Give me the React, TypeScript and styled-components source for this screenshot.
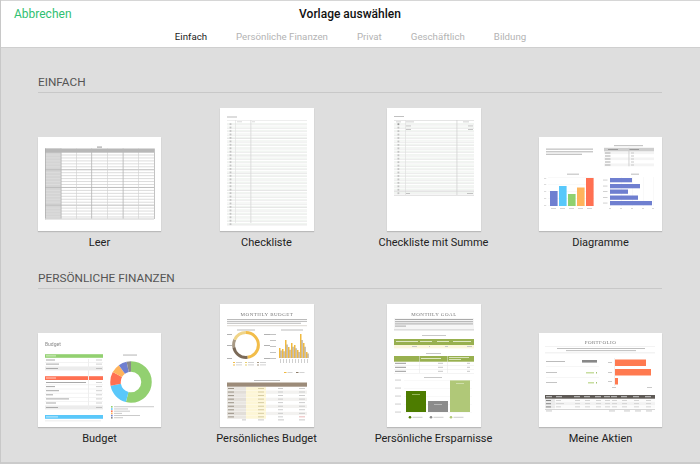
import React from "react";
import styled, { createGlobalStyle } from "styled-components";

const Global = createGlobalStyle`
  html, body { margin: 0; padding: 0; background: #dedede; }
  body { font-family: Roboto, "Liberation Sans", sans-serif; -webkit-font-smoothing: antialiased; }
`;
const Page = styled.div`
  width: 700px; height: 464px; overflow: hidden; background: #dedede;
  display: flex; flex-direction: column; box-sizing: border-box;
  border-left: 1px solid #c8c8c8; border-bottom: 2px solid #cbcbcb;
`;
const Header = styled.header`
  height: 48px; flex: none; box-sizing: border-box; background: #fff;
  border-top: 1px solid #d6d6d6; border-bottom: 1px solid #cfcfcf;
  position: relative; display: flex; flex-direction: column; align-items: center;
`;
const Cancel = styled.span`
  position: absolute; left: 13px; top: 5px; font-size: 12px; line-height: 17px; color: #2fbf71;
`;
const Title = styled.h1`
  margin: 5px 0 0 -1px; font-size: 12px; line-height: 17px; font-weight: 500; color: #111;
`;
const Tabs = styled.nav`
  margin-top: 7px; display: flex; gap: 29px;
`;
const Tab = styled.span<{ $active?: boolean }>`
  font-size: 9.7px; line-height: 13px; color: ${(p) => (p.$active ? "#222" : "#b3b3b3")};
`;
const Main = styled.main`
  padding: 0 38px 0 37px; display: flex; flex-direction: column;
`;
const Section = styled.section`
  display: flex; flex-direction: column;
`;
const SectionTitle = styled.h2<{ $first?: boolean }>`
  margin: ${(p) => (p.$first ? "27px" : "21px")} 0 0; padding-bottom: 2px; font-size: 11.8px; line-height: 15px; font-weight: 400;
  color: #555; border-bottom: 1px solid #c8c8c8;
`;
const Grid = styled.div`
  display: grid; grid-template-columns: repeat(4, 123px); column-gap: 44px; margin-top: 15px;
`;
const Card = styled.figure`
  margin: 0; display: flex; flex-direction: column; align-items: center; height: 142px; justify-content: flex-end;
`;
const Paper = styled.div<{ $portrait?: boolean }>`
  width: ${(p) => (p.$portrait ? 94 : 123)}px; height: ${(p) => (p.$portrait ? 123 : 94)}px;
  background: #fff; box-shadow: 0 1px 1px rgba(0,0,0,.16); display: flex; overflow: hidden;
  svg { display: block; filter: blur(.35px); }
`;
const Label = styled.figcaption`
  margin-top: 5px; font-size: 11px; line-height: 14px; height: 14px; color: #222; white-space: nowrap;
`;

const Svg = ({ w, h, children }: { w: number; h: number; children: React.ReactNode }) => (
  <svg width={w} height={h} viewBox={`0 0 ${w} ${h}`}>{children}</svg>
);
const R = ({ x, y, w, h, f }: { x: number; y: number; w: number; h: number; f: string }) => (
  <rect x={x} y={y} width={w} height={h} fill={f} />
);
const Greek = ({ x, y, ws, step = 1.6, f = "#aaa", h = 0.8 }: { x: number; y: number; ws: number[]; step?: number; f?: string; h?: number }) => (
  <>{ws.map((w, i) => <R key={i} x={x} y={y + i * step} w={w} h={h} f={f} />)}</>
);
const Serif = styled.text`
  font-family: "Liberation Serif", serif; letter-spacing: .5px; fill: #777; text-anchor: middle;
`;
const Ring = ({ cx, cy, r, sw, data, start = -90 }: { cx: number; cy: number; r: number; sw: number; data: [number, string][]; start?: number }) => {
  let acc = 0;
  return (
    <g transform={`rotate(${start} ${cx} ${cy})`}>
      {data.map(([v, c], i) => {
        const el = <circle key={i} cx={cx} cy={cy} r={r} fill="none" stroke={c} strokeWidth={sw} pathLength={100} strokeDasharray={`${v} ${100 - v}`} strokeDashoffset={-acc} />;
        acc += v;
        return el;
      })}
    </g>
  );
};

const Leer = () => {
  const cols = [22.7, 38.3, 53.3, 69.3, 84.7, 100.3, 116];
  const rows = Array.from({ length: 22 }, (_, i) => 17.5 + i * 2.95);
  return (
    <Svg w={123} h={94}>
      <R x={59} y={9.5} w={5} h={1.2} f="#aaa" />
      <R x={7} y={11.5} w={16} h={70.5} f="#d4d4d4" />
      {rows.map((y, i) => <R key={i} x={7} y={y} w={109} h={1} f={i % 6 === 5 ? "#bdbdbd" : "#dcdcdc"} />)}
      {cols.map((x, i) => <R key={i} x={x} y={11.5} w={i % 2 ? .6 : .8} h={70.5} f={i % 2 ? "#cfcfcf" : "#b4b4b4"} />)}
      <R x={7} y={11.5} w={109} h={4.2} f="#b8b8b8" />
      <R x={7} y={11.5} w={.7} h={71} f="#aaa" />
      <R x={7} y={81.4} w={109} h={1.2} f="#d8d8d8" />
    </Svg>
  );
};
const Checklist = () => {
  const rows = Array.from({ length: 30 }, (_, i) => 15 + i * 3.45);
  return (
    <Svg w={94} h={123}>
      <R x={7} y={8.5} w={10} h={1} f="#bbb" />
      <R x={7} y={12} w={80} h={.5} f="#dcdcdc" />
      <R x={17} y={13.5} w={5} h={.7} f="#ccc" />
      <R x={32} y={13.5} w={3} h={.7} f="#ccc" />
      {rows.map((y, i) => (
        <g key={i}>
          <R x={7} y={y} w={80} h={1.3} f="#f1f5f1" />
          <R x={7} y={y + 1.6} w={80} h={.6} f={i % 5 === 4 ? "#d8d8d8" : "#e4e4e4"} />
          <R x={9.6} y={y + .2} w={1.8} h={1.8} f="#c4c4c4" />
        </g>
      ))}
      <R x={15} y={12} w={.6} h={103} f="#dedede" />
      <R x={30.5} y={12} w={.8} h={103} f="#d6d6d6" />
    </Svg>
  );
};
const ChecklistSum = () => {
  const rows = Array.from({ length: 21 }, (_, i) => 15 + i * 3.45);
  return (
    <Svg w={94} h={123}>
      <R x={7} y={8} w={10} h={1} f="#c0c0c0" />
      <R x={7} y={12} w={80} h={.6} f="#d4d4d4" />
      <R x={9} y={13.5} w={5} h={.8} f="#c8c8c8" />
      <R x={19} y={13.5} w={8} h={.8} f="#c8c8c8" />
      <R x={76} y={13.5} w={6} h={.8} f="#c8c8c8" />
      {rows.map((y, i) => (
        <g key={i}>
          <R x={7} y={y} w={80} h={1.4} f="#f1f5f1" />
          <R x={7} y={y + 1.7} w={80} h={.6} f="#e2e2e2" />
          <R x={10.5} y={y + .3} w={1.8} h={1.8} f={i < 1 ? "#999" : "#c4c4c4"} />
        </g>
      ))}
      <R x={19} y={17.5} w={5} h={.9} f="#c0c0c0" /><R x={19} y={21} w={5} h={.9} f="#c0c0c0" />
      <R x={81} y={17.5} w={5} h={.9} f="#c0c0c0" /><R x={81} y={21} w={5} h={.9} f="#c0c0c0" />
      <R x={18} y={12} w={.6} h={75} f="#dcdcdc" />
      <R x={69.6} y={12} w={.7} h={75} f="#cccccc" />
      <R x={7} y={83} w={80} h={.6} f="#d2d2d2" />
      <R x={7} y={87} w={80} h={.6} f="#d2d2d2" />
      <R x={19} y={85} w={4} h={.9} f="#bbb" /><R x={80} y={85} w={6} h={.9} f="#bbb" />
    </Svg>
  );
};
const Diagrams = () => (
  <Svg w={123} h={94}>
    <Greek x={7} y={11.5} ws={[47, 47, 36]} step={2.6} h={1.3} f="#c4c4c4" />
    <R x={75} y={8} w={29} h={1.2} f="#c6c6c6" />
    <R x={65} y={10.8} w={50} h={3.7} f="#cecece" />
    <R x={69} y={12} w={10} h={1} f="#999" /><R x={90} y={12} w={10} h={1} f="#999" />
    {[0, 1, 2, 3, 4].map((i) => (
      <g key={i}>
        <R x={65} y={14.5 + i * 3} w={50} h={2.8} f={i % 2 ? "#fff" : "#f4f4f4"} />
        <R x={66} y={15.5 + i * 3} w={5.5} h={1} f="#aaa" />
        <R x={92} y={15.5 + i * 3} w={3} h={1} f="#c8c8c8" />
      </g>
    ))}
    <R x={89.5} y={10.8} w={.9} h={18.5} f="#cecece" />
    <R x={28} y={36.6} w={12} h={1.2} f="#c6c6c6" />
    {[40, 47, 54, 61, 68].map((y) => <R key={y} x={9} y={y} w={46} h={.4} f="#f0f0f0" />)}
    {[41, 47, 54, 61, 68].map((y) => <R key={y} x={5} y={y} w={2.2} h={.8} f="#d4d4d4" />)}
    {[[11, 54, "#6f7fd0"], [20, 49, "#58c8fb"], [29, 57, "#8fd16f"], [38, 50.5, "#ffb35c"], [47, 41, "#ff7052"]].map(([x, y, c]) => (
      <g key={String(x)}>
        <R x={Number(x)} y={Number(y)} w={7.6} h={69 - Number(y)} f={String(c)} />
        <R x={Number(x) + 1} y={71} w={5} h={.9} f="#d0d0d0" />
      </g>
    ))}
    <R x={92} y={36.6} w={8} h={1.2} f="#c6c6c6" />
    {[71, 82, 93, 104, 114].map((x) => <R key={x} x={x} y={40} w={.4} h={29} f="#f0f0f0" />)}
    {[[41, 93], [47, 101], [52.5, 89], [58.5, 99], [64, 113]].map(([y, e]) => (
      <g key={y}>
        <R x={71} y={y} w={e - 71} h={4.3} f="#6f7fd0" />
        <R x={64} y={y + 1.6} w={4.5} h={.9} f="#cccccc" />
      </g>
    ))}
    {[71, 82, 93, 104, 114].map((x) => <R key={x} x={x - 1} y={71} w={2} h={.9} f="#d4d4d4" />)}
  </Svg>
);
const TableRows = ({ y, widths }: { y: number; widths: number[] }) => (
  <>
    {widths.map((w, i) => (
      <g key={i}>
        <R x={8} y={y + i * 4.1} w={w} h={1} f="#a8a8a8" />
        <R x={58} y={y + i * 4.1} w={6} h={1} f="#d0d0d0" />
        <R x={7} y={y + i * 4.1 + 2.7} w={58} h={.4} f="#e2e2e2" />
      </g>
    ))}
  </>
);
const Budget = () => (
  <Svg w={123} h={94}>
    <text x={7} y={13} fontFamily="Roboto, sans-serif" fontSize={5} fill="#888">Budget</text>
    <R x={7} y={21.2} w={58} h={3.6} f="#92d070" />
    <R x={8} y={22.4} w={10} h={1} f="#d8efc8" />
    <TableRows y={26.5} widths={[9, 13]} />
    <R x={7} y={34} w={58} h={3.4} f="#ececec" />
    <R x={8} y={35} w={12} h={1} f="#aaa" /><R x={58} y={35} w={6} h={1} f="#c0c0c0" />
    <R x={7} y={43.2} w={58} h={3.8} f="#ff7052" />
    <R x={8} y={44.5} w={10} h={1} f="#ffd0c4" />
    <TableRows y={49} widths={[40, 9, 13, 7, 23, 10]} />
    <R x={7} y={73} w={58} h={3.4} f="#ececec" />
    <R x={8} y={74} w={12} h={1} f="#aaa" /><R x={58} y={74} w={6} h={1} f="#c0c0c0" />
    <R x={7} y={82} w={58} h={3.8} f="#5ac8fa" />
    <R x={8} y={83.4} w={12} h={1} f="#c8ecfc" />
    <R x={7} y={87.6} w={56} h={.6} f="#ddd" />
    <R x={50} y={26} w={1} h={51} f="#eeeeee" />
    <R x={85} y={21.5} w={14} h={1.1} f="#bbb" />
    <Ring cx={93} cy={49} r={15.5} sw={10.5} data={[[54, "#92d070"], [18, "#5ac8fa"], [11, "#ff7052"], [7, "#ffb35c"], [6.5, "#6f7fd0"], [3.5, "#8a8a8a"]]} />
    {([["#92d070", 40], ["#5ac8fa", 14], ["#ff7052", 16], ["#ffb35c", 8], ["#6f7fd0", 26], ["#8a8a8a", 9]] as [string, number][]).map(([c, w], i) => (
      <g key={i}>
        <R x={73} y={73 + i * 2.2} w={1.6} h={1.6} f={c} />
        <R x={76} y={73.3 + i * 2.2} w={w} h={.9} f="#c4c4c4" />
      </g>
    ))}
  </Svg>
);
const PersonalBudget = () => {
  const bars = [10, 9, 18, 11, 15, 13, 8, 24, 15, 6];
  return (
    <Svg w={94} h={123}>
      <Serif x={47} y={12} fontSize={5}>MONTHLY BUDGET</Serif>
      <Greek x={7} y={15} ws={[80, 80, 74]} step={1.9} h={.9} f="#b4b4b4" />
      <R x={7} y={21.6} w={80} h={.5} f="#bbb4a8" />
      <R x={17} y={25.5} w={18} h={1} f="#bbb" /><R x={61} y={25.5} w={22} h={1} f="#bbb" />
      <Ring cx={26} cy={41} r={12.4} sw={3} data={[[48, "#f2bd4a"], [24, "#7b6a58"], [10, "#a89a85"], [18, "#f0d488"]]} />
      {[30, 41, 54].map((y) => <g key={y}><R x={7} y={y} w={5} h={.9} f="#aaa" /><R x={44} y={y} w={6} h={.9} f="#aaa" /></g>)}
      {[[13, "#f2bd4a"], [25, "#e8d070"], [37, "#a89a85"]].map(([x, c], i) => (
        <g key={i}>
          <R x={Number(x)} y={58} w={2} h={1} f={String(c)} /><R x={Number(x) + 3} y={58} w={6} h={.8} f="#c8c8c8" />
          <R x={Number(x)} y={60.5} w={2} h={1} f={String(c)} /><R x={Number(x) + 3} y={60.5} w={6} h={.8} f="#c8c8c8" />
        </g>
      ))}
      {[30, 36, 42, 48, 54].map((y) => <R key={y} x={50} y={y} w={6} h={.9} f="#bbb" />)}
      {bars.map((h, i) => (
        <g key={i}>
          <R x={59 + i * 3} y={54 - h} w={1.5} h={h} f="#f0b93f" />
          <R x={60.5 + i * 3} y={54 - h * 0.75} w={1.1} h={h * 0.75} f="#a89a85" />
          <R x={60 + i * 3} y={55} w={.8} h={4} f="#c4c4c4" />
        </g>
      ))}
      <R x={64} y={68} w={2.5} h={1} f="#f0b93f" /><R x={67.5} y={68} w={5} h={.8} f="#c8c8c8" />
      <R x={76} y={68} w={2.5} h={1} f="#8d7c6a" /><R x={79.5} y={68} w={5} h={.8} f="#c8c8c8" />
      <R x={34} y={76} w={26} h={1} f="#bbb" />
      <R x={7} y={78.5} w={80} h={4.2} f="#9c8b79" />
      {Array.from({ length: 9 }, (_, i) => (
        <g key={i}>
          <R x={7} y={83 + i * 3.55} w={19} h={3.3} f={i % 2 ? "#e2ded8" : "#e9e6e1"} />
          <R x={26} y={83 + i * 3.55} w={20} h={3.3} f="#fdf6d6" />
          <R x={46} y={83 + i * 3.55} w={41} h={3.3} f={i % 2 ? "#f3f2f0" : "#fff"} />
          <R x={8} y={84 + i * 3.55} w={6} h={1} f="#9c9488" />
          <R x={38} y={84 + i * 3.55} w={6} h={.9} f="#d2c89e" />
          <R x={58} y={84 + i * 3.55} w={5} h={.9} f="#c8c8c8" />
          <R x={79} y={84 + i * 3.55} w={6} h={.9} f={i === 8 ? "#e8b0b0" : "#c8c8c8"} />
        </g>
      ))}
      <R x={22} y={115.5} w={4} h={.8} f="#bbb" /><R x={38} y={115.5} w={6} h={.8} f="#bbb" />
      <R x={58} y={115.5} w={6} h={.8} f="#bbb" /><R x={79} y={115.5} w={6} h={.8} f="#bbb" />
    </Svg>
  );
};
const Savings = () => (
  <Svg w={94} h={123}>
    <Serif x={47} y={12} fontSize={5}>MONTHLY GOAL</Serif>
    <R x={7} y={14.2} w={80} h={11} f="#f6f6f6" />
    <Greek x={8} y={15} ws={[78, 78, 78, 11]} step={2.2} h={1} f="#aaa" />
    <R x={7} y={25} w={80} h={1.6} f="#dedede" />
    <R x={35} y={31} w={24} h={1} f="#c8c8c8" />
    <R x={7} y={35} w={80} h={6} f="#98b04f" />
    {[[9, 22], [33, 12], [50, 12], [66, 18]].map(([x, w]) => <R key={x} x={x} y={37} w={w} h={1} f="#dfe8c4" />)}
    <R x={7} y={41} w={80} h={3.4} f="#fbf6dd" />
    <R x={25} y={42} w={5} h={1} f="#c8c8c8" /><R x={42} y={42} w={1} h={1} f="#c8c8c8" /><R x={58} y={42} w={3} h={1} f="#c8c8c8" /><R x={80} y={42} w={5} h={1} f="#c8c8c8" />
    <R x={39} y={49} w={15} h={1} f="#c8c8c8" />
    <R x={7} y={52} w={80} h={5.7} f="#98b04f" />
    <R x={34} y={54} w={20} h={1} f="#dfe8c4" /><R x={62} y={53} w={20} h={.9} f="#dfe8c4" /><R x={62} y={55} w={12} h={.9} f="#dfe8c4" />
    {[58, 62, 66].map((y) => <g key={y}><R x={8} y={y + .8} w={11} h={1} f="#999" /><R x={51} y={y + .8} w={5} h={1} f="#c8c8c8" /><R x={80} y={y + .8} w={3} h={1} f="#c8c8c8" /><R x={7} y={y + 3} w={80} h={.4} f="#e2e2e2" /></g>)}
    <R x={32} y={52} w={.5} h={17} f="#e4e4e4" /><R x={60} y={52} w={.5} h={17} f="#e4e4e4" />
    <R x={37} y={73} w={18} h={1} f="#c8c8c8" />
    {[76, 84, 92, 100, 108].map((y) => <g key={y}><R x={17} y={y} w={68} h={.4} f="#efefef" /><R x={8} y={y - .4} w={6} h={.9} f="#c8c8c8" /></g>)}
    <R x={19} y={87} w={20} h={21} f="#4d7c00" />
    <R x={41} y={97} w={20} h={11} f="#8c8c8c" />
    <R x={63} y={76.4} w={20} h={31.6} f="#b0c878" />
    <R x={25} y={90} w={8} h={.8} f="#a8c470" />
    <R x={47} y={100} w={8} h={.8} f="#c4c4c4" />
    <R x={69} y={79} w={8} h={.8} f="#d8e4b8" />
    {[[23, "#4d7c00"], [44, "#8c8c8c"], [64, "#b0c878"]].map(([x, c], i) => (
      <g key={i}>
        <circle cx={Number(x)} cy={113.2} r={1.3} fill={String(c)} />
        <R x={Number(x) + 2.5} y={112.8} w={10} h={.9} f="#c8c8c8" />
      </g>
    ))}
  </Svg>
);
const Stocks = () => (
  <Svg w={123} h={94}>
    <Serif x={61.5} y={11} fontSize={5}>PORTFOLIO</Serif>
    <R x={6} y={13} w={110} h={.4} f="#e0e0e0" />
    <R x={18} y={15} w={88} h={.9} f="#b8b8b8" /><R x={27} y={17.2} w={70} h={.9} f="#b8b8b8" />
    <R x={6} y={19.4} w={110} h={.9} f="#ebebeb" />
    <R x={7} y={28} w={19} h={1} f="#bbb" /><R x={43} y={27} w={15} h={2.6} f="#888" />
    <R x={7} y={33.5} w={53} h={.4} f="#e8e8e8" />
    <R x={7} y={39} w={11} h={1} f="#c4c4c4" /><R x={47} y={39} w={8} h={1.5} f="#c8dea0" /><R x={57} y={39} w={1} h={1.5} f="#a3c46e" />
    <R x={7} y={44} w={53} h={.4} f="#e8e8e8" />
    <R x={7} y={49} w={11} h={1} f="#c4c4c4" /><R x={49} y={49} w={6} h={1.5} f="#c8dea0" /><R x={57} y={49} w={1} h={1.5} f="#a3c46e" />
    <R x={76} y={26.5} w={31} h={6.5} f="#ff7a50" />
    <R x={76} y={36} w={36} h={6.5} f="#ff7a50" />
    <R x={76} y={45} w={3} h={6.5} f="#ff7a50" />
    {[29, 39, 48].map((y) => <R key={y} x={69} y={y} w={4} h={.9} f="#c4c4c4" />)}
    <R x={75.6} y={25} w={.4} h={28} f="#d8d8d8" />
    <R x={73} y={54} w={4} h={.9} f="#c4c4c4" /><R x={108} y={54} w={5} h={.9} f="#c4c4c4" />
    <R x={6} y={62} w={110} h={3.7} f="#5e5a56" />
    {[7, 17, 35, 45, 56, 65, 72, 82, 94, 106].map((x) => <R key={x} x={x} y={63.2} w={6} h={1} f="#ccc" />)}
    {[0, 1, 2].map((i) => (
      <g key={i}>
        <R x={6} y={66 + i * 3.2} w={110} h={2.9} f={i === 1 ? "#f2f2f2" : "#fbfbfb"} />
        <R x={6} y={66 + i * 3.2} w={10} h={2.9} f="#eaeaea" />
        <R x={7} y={67 + i * 3.2} w={5} h={1} f="#888" />
        {[17, 36, 46, 57, 66, 73, 83, 95, 107].map((x) => <R key={x} x={x} y={67 + i * 3.2} w={i === 1 && x === 17 ? 8 : 5} h={.9} f="#d0d0d0" />)}
      </g>
    ))}
    <R x={6} y={76} w={110} h={.5} f="#aaa" />
    {[7, 70, 85, 96, 107].map((x) => <R key={x} x={x} y={77.5} w={6} h={.9} f="#c4c4c4" />)}
  </Svg>
);

const first = [
  { name: "Leer", Art: Leer, portrait: false },
  { name: "Checkliste", Art: Checklist, portrait: true },
  { name: "Checkliste mit Summe", Art: ChecklistSum, portrait: true },
  { name: "Diagramme", Art: Diagrams, portrait: false },
];
const second = [
  { name: "Budget", Art: Budget, portrait: false },
  { name: "Persönliches Budget", Art: PersonalBudget, portrait: true },
  { name: "Persönliche Ersparnisse", Art: Savings, portrait: true },
  { name: "Meine Aktien", Art: Stocks, portrait: false },
];
const tabs = ["Einfach", "Persönliche Finanzen", "Privat", "Geschäftlich", "Bildung"];

export default function App() {
  return (
    <Page>
      <Global />
      <Header>
        <Cancel>Abbrechen</Cancel>
        <Title>Vorlage auswählen</Title>
        <Tabs>{tabs.map((t, i) => <Tab key={t} $active={i === 0}>{t}</Tab>)}</Tabs>
      </Header>
      <Main>
        <Section>
          <SectionTitle $first>EINFACH</SectionTitle>
          <Grid>
            {first.map(({ name, Art, portrait }) => (
              <Card key={name}><Paper $portrait={portrait}><Art /></Paper><Label>{name}</Label></Card>
            ))}
          </Grid>
        </Section>
        <Section>
          <SectionTitle>PERSÖNLICHE FINANZEN</SectionTitle>
          <Grid>
            {second.map(({ name, Art, portrait }) => (
              <Card key={name}><Paper $portrait={portrait}><Art /></Paper><Label>{name}</Label></Card>
            ))}
          </Grid>
        </Section>
      </Main>
    </Page>
  );
}
